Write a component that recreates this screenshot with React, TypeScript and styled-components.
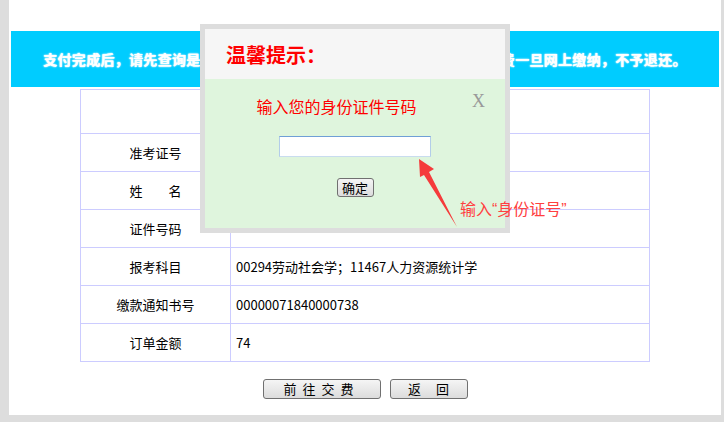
import React from 'react'
import styled, { createGlobalStyle } from 'styled-components'

const GlobalStyle = createGlobalStyle`
  html, body {
    margin: 0;
    padding: 0;
    background: #dddddd;
  }
  body {
    font-family: "Noto Sans CJK SC", "Liberation Sans", sans-serif;
    font-size: 13px;
    color: #000;
  }
`

const rows = [
  { label: '准考证号', value: '' },
  { label: '姓\u3000\u3000名', value: '' },
  { label: '证件号码', value: '' },
  { label: '报考科目', value: '00294劳动社会学；11467人力资源统计学' },
  { label: '缴款通知书号', value: '00000071840000738' },
  { label: '订单金额', value: '74' },
]

const App: React.FC = () => {
  return (
    <StyledScreen>
      <GlobalStyle />
      <StyledPage>
        <StyledBanner>
          支付完成后，请先查询是否缴费成功，如未成功请勿重复支付。考试报名费一旦网上缴纳，不予退还。
        </StyledBanner>
        <StyledTable>
          <tbody>
            <tr>
              <StyledTitleCell colSpan={2} />
            </tr>
            {rows.map((row) => (
              <tr key={row.label}>
                <StyledLabelCell>{row.label}</StyledLabelCell>
                <StyledValueCell>{row.value}</StyledValueCell>
              </tr>
            ))}
          </tbody>
        </StyledTable>
        <StyledActions>
          <StyledButton $width={118} $spacing={6} $indent={0}>前往交费</StyledButton>
          <StyledButton $width={78} $spacing={15} $indent={15}>返回</StyledButton>
        </StyledActions>
      </StyledPage>

      <StyledDialog>
        <StyledDialogHeader>温馨提示：</StyledDialogHeader>
        <StyledDialogBody>
          <StyledClose>X</StyledClose>
          <StyledPrompt>输入您的身份证件号码</StyledPrompt>
          <StyledInput type="text" />
          <StyledOkButton>确定</StyledOkButton>
        </StyledDialogBody>
      </StyledDialog>

      <StyledArrow width="724" height="422" viewBox="0 0 724 422">
        <polygon points="419,159 434,169 429,172 457,227 424,175 420,177" fill="#f53b3b" />
      </StyledArrow>
      <StyledNote>
        输入<StyledQuote>“</StyledQuote>身份证号<StyledQuote>”</StyledQuote>
      </StyledNote>
    </StyledScreen>
  )
}

const StyledScreen = styled.div`
  position: relative;
  width: 724px;
  height: 422px;
  overflow: hidden;
`

const StyledPage = styled.div`
  margin-left: 9px;
  width: 712px;
  height: 415px;
  padding-top: 31px;
  box-sizing: border-box;
  background: #fff;
`

const StyledBanner = styled.div`
  margin: 0 2px;
  height: 56px;
  display: flex;
  align-items: center;
  justify-content: center;
  background: #00ccff;
  color: #fff;
  font-size: 14px;
  font-weight: bold;
  letter-spacing: 0.3px;
  white-space: nowrap;
  text-shadow: 0 0 1px #fff, 0 0 2px #fff;
`

const StyledTable = styled.table`
  margin: 2px auto 0;
  width: 570px;
  border-collapse: collapse;
  border: 1px solid #ccccff;

  td {
    border: 1px solid #ccccff;
    padding: 0;
  }
`

const StyledTitleCell = styled.td`
  height: 43px;
`

const StyledLabelCell = styled.td`
  width: 149px;
  height: 37px;
  text-align: center;
`

const StyledValueCell = styled.td`
  padding-left: 5px !important;
`

const StyledActions = styled.div`
  margin-top: 17px;
  display: flex;
  justify-content: center;
  gap: 9px;
`

const StyledButton = styled.button<{ $width: number; $spacing: number; $indent: number }>`
  width: ${(props) => props.$width}px;
  height: 20px;
  padding: 0 0 0 ${(props) => props.$indent}px;
  border: 1px solid #707070;
  border-radius: 3px;
  background: linear-gradient(#f5f5f5, #dcdcdc);
  font-family: inherit;
  font-size: 13px;
  line-height: 18px;
  letter-spacing: ${(props) => props.$spacing}px;
  color: #000;
`

const StyledDialog = styled.div`
  position: absolute;
  left: 200px;
  top: 24px;
  width: 310px;
  height: 209px;
  box-sizing: border-box;
  border: 5px solid #dddddd;
  display: flex;
  flex-direction: column;
`

const StyledDialogHeader = styled.div`
  height: 50px;
  padding-left: 21px;
  display: flex;
  align-items: center;
  background: #f6f6f6;
  color: #ff0000;
  font-size: 20px;
  font-weight: bold;
`

const StyledDialogBody = styled.div`
  flex: 1;
  position: relative;
  display: flex;
  flex-direction: column;
  align-items: center;
  padding-top: 16px;
  background: #dff5dd;
`

const StyledClose = styled.span`
  position: absolute;
  right: 20px;
  top: 13px;
  font-family: "Liberation Serif", serif;
  font-size: 18px;
  line-height: 18px;
  color: #999;
`

const StyledPrompt = styled.div`
  padding-right: 37px;
  font-size: 16px;
  line-height: 22px;
  color: #ff0000;
`

const StyledInput = styled.input`
  margin-top: 19px;
  width: 152px;
  height: 21px;
  box-sizing: border-box;
  border: 1px solid;
  border-color: #6f9fd6 #b3cde9 #c9dcef #b3cde9;
  background: #fff;
  outline: none;
`

const StyledOkButton = styled.button`
  margin-top: 21px;
  width: 37px;
  height: 19px;
  padding: 0;
  border: 1px solid #707070;
  border-radius: 3px;
  background: linear-gradient(#f5f5f5, #dcdcdc);
  font-family: inherit;
  font-size: 13px;
  line-height: 17px;
  color: #000;
`

const StyledArrow = styled.svg`
  position: absolute;
  left: 0;
  top: 0;
  pointer-events: none;
`

const StyledNote = styled.div`
  position: absolute;
  left: 460px;
  top: 198px;
  font-size: 16px;
  line-height: 20px;
  color: #ff4040;
  white-space: nowrap;
`

const StyledQuote = styled.span`
  font-family: "Liberation Sans", sans-serif;
`

export default App
